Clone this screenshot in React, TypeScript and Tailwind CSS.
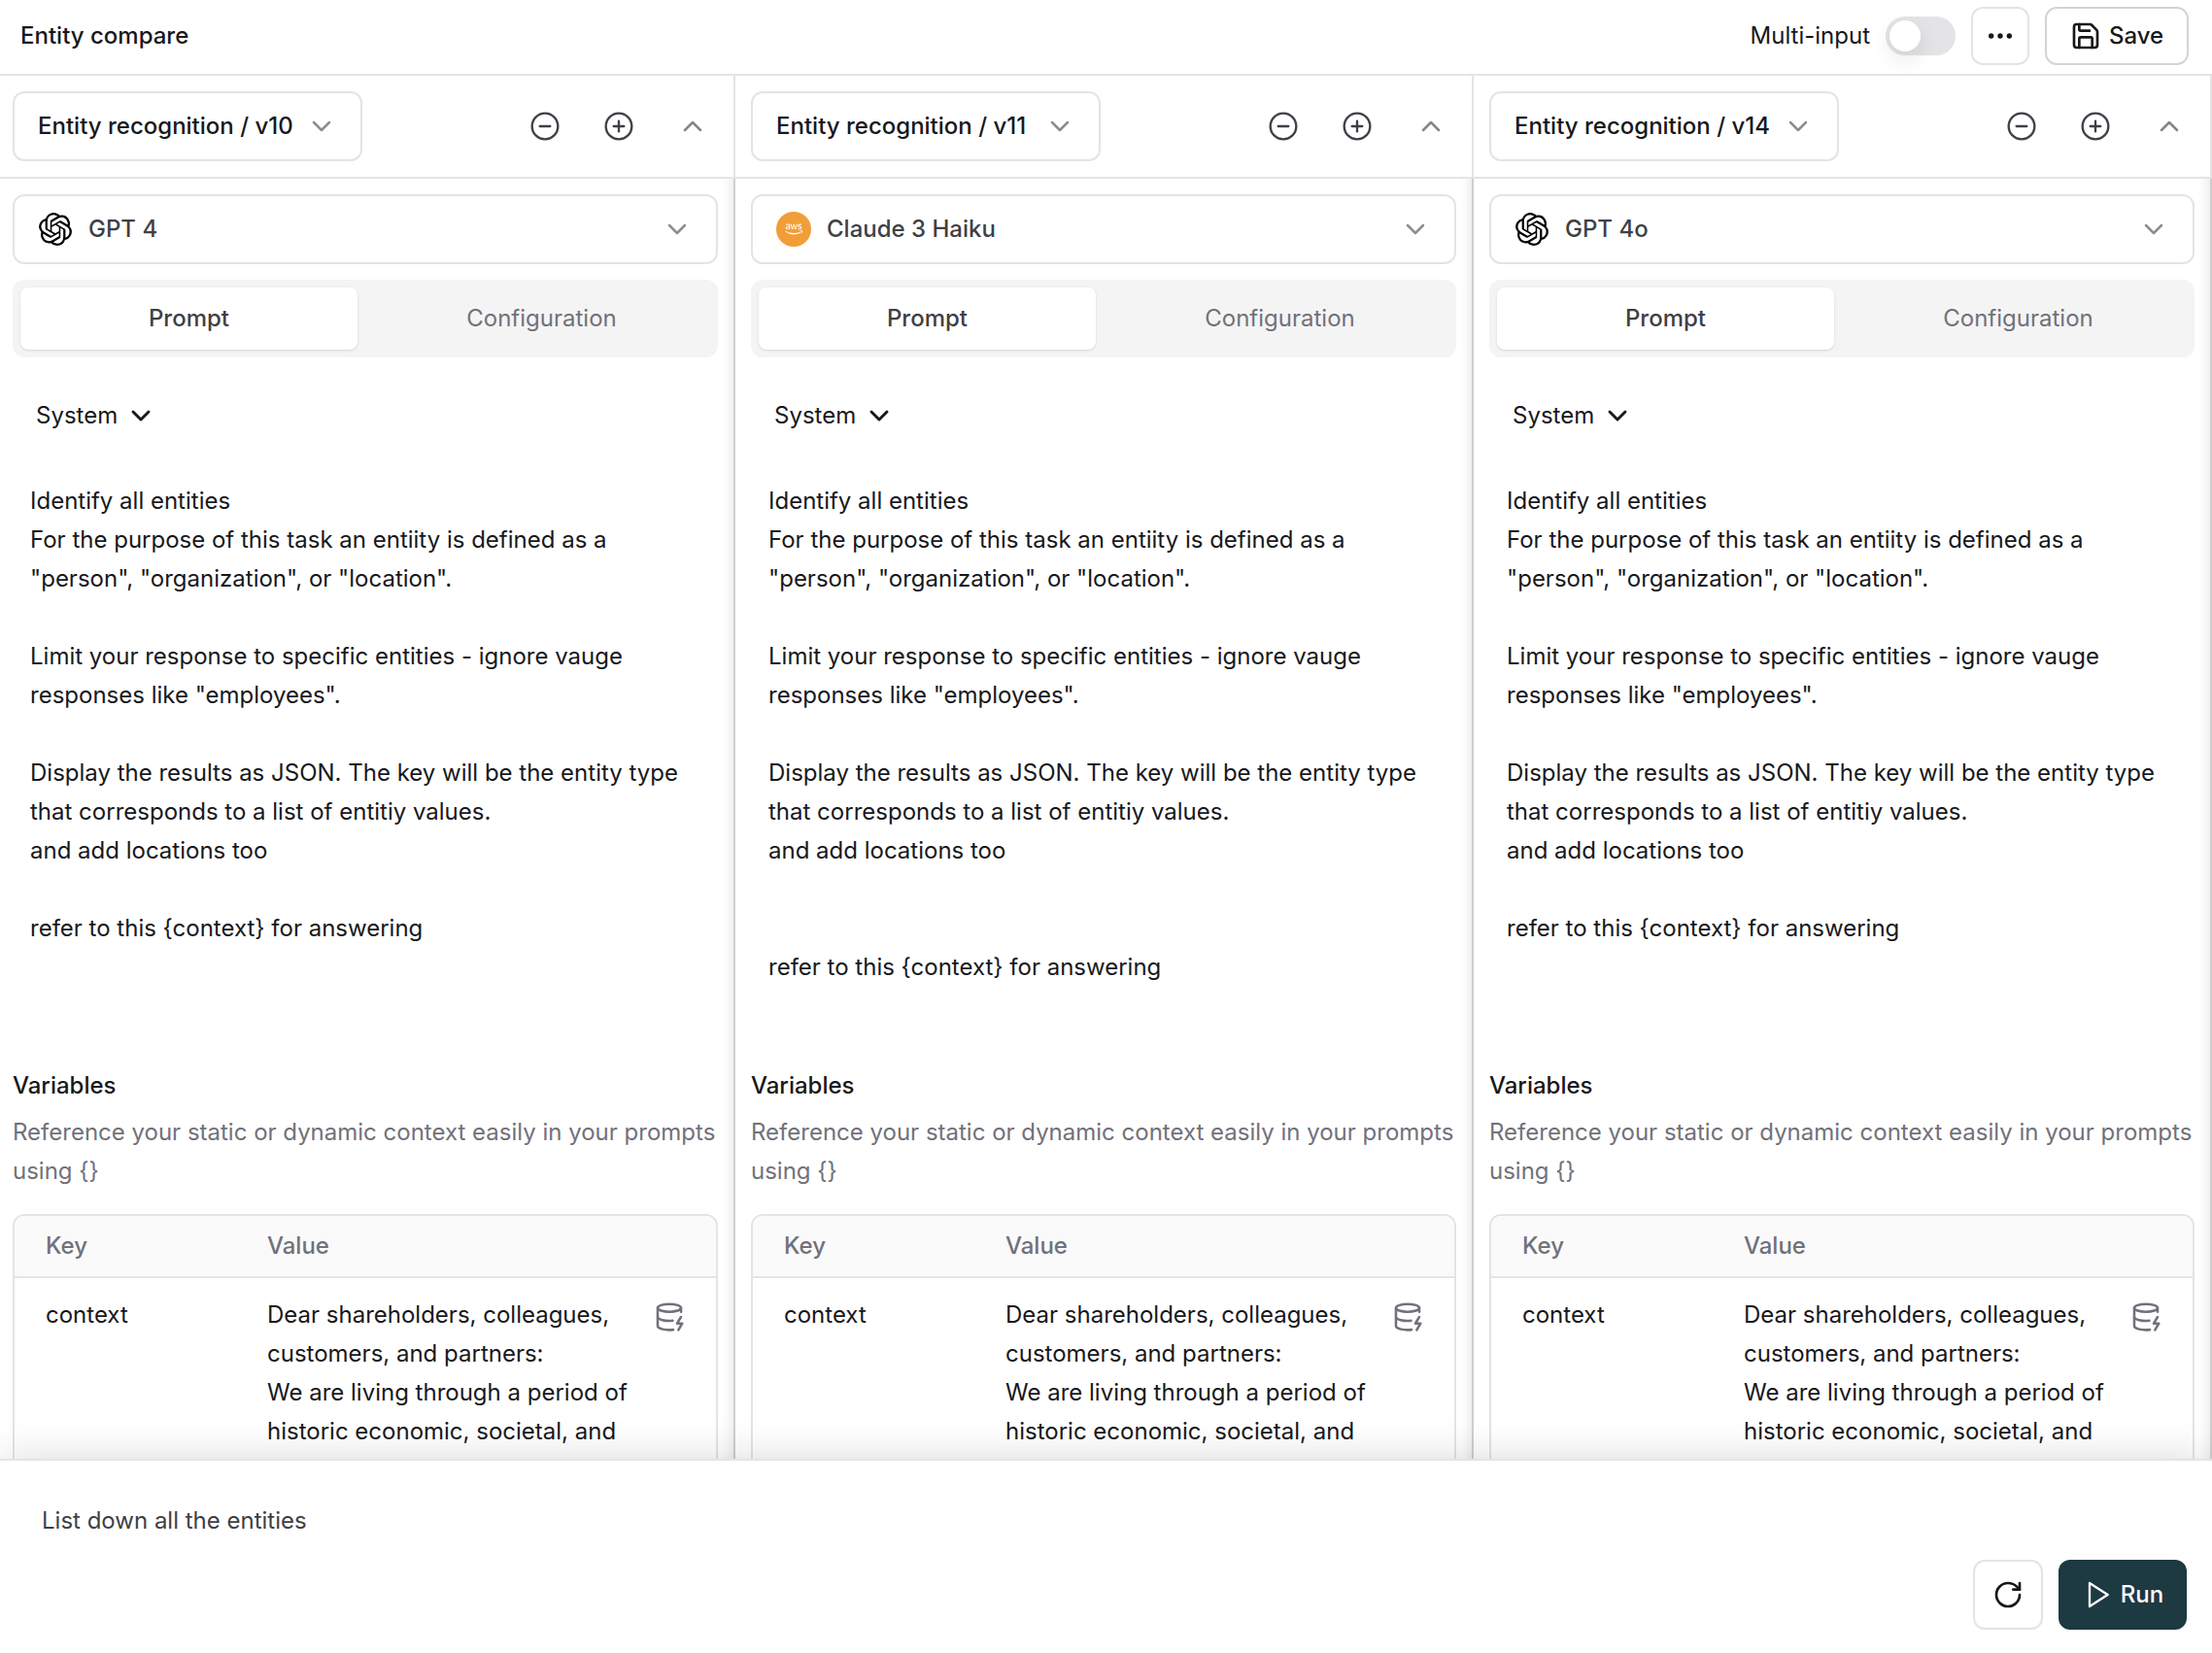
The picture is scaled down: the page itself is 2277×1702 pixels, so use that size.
import { ChevronDown, ChevronUp, CircleMinus, CirclePlus, DatabaseZap, Ellipsis, RotateCw, Save } from "lucide-react";
import { SiOpenai } from "react-icons/si";
import { FaAws } from "react-icons/fa";

const opening = `Identify all entities
For the purpose of this task an entiity is defined as a
"person", "organization", or "location".

Limit your response to specific entities - ignore vauge
responses like "employees".

Display the results as JSON. The key will be the entity type
that corresponds to a list of entitiy values.
and add locations too
`;
const closing = "refer to this {context} for answering";

const columns = [
  { version: "v10", model: "GPT 4", provider: "openai", prompt: opening + "\n" + closing },
  { version: "v11", model: "Claude 3 Haiku", provider: "aws", prompt: opening + "\n\n" + closing },
  { version: "v14", model: "GPT 4o", provider: "openai", prompt: opening + "\n" + closing },
];

function Column({ version, model, provider, prompt }: (typeof columns)[number]) {
  return (
    <section className="flex h-full w-[760px] shrink-0 flex-col">
      <div className="relative z-10 flex h-[106px] shrink-0 items-center justify-between border-r-2 border-b-2 border-[#e4e4e4] bg-white px-4">
        <button className="flex h-[72px] w-[360px] items-center rounded-xl border-2 border-[#e4e4e4] pl-6 font-medium whitespace-nowrap">
          <span className="w-[264px] text-left">Entity recognition / {version}</span>
          <ChevronDown size={32} strokeWidth={1.9} className="ml-3 text-[#8d8d8d]" />
        </button>
        <div className="flex items-center gap-11 pr-2.5 text-[#3f3f46]">
          <CircleMinus size={32} strokeWidth={1.75} />
          <CirclePlus size={32} strokeWidth={1.75} />
          <ChevronUp size={32} strokeWidth={1.9} className="text-[#85858a]" />
        </div>
      </div>
      <div className="flex min-h-0 grow flex-col border-r-2 border-[#cfcfcf] px-4 pt-4 shadow-[inset_-14px_0_14px_-14px_rgba(0,0,0,0.13)]">
        <button className="flex h-[72px] shrink-0 items-center rounded-xl border-2 border-[#e4e4e4] pr-6 pl-6 font-medium text-[#3f3f46]">
          {provider === "openai" ? (
            <span className="flex size-9 items-center justify-center text-black">
              <SiOpenai size={34} />
            </span>
          ) : (
            <span className="flex size-9 items-center justify-center rounded-full bg-[#f19e38] text-white">
              <FaAws size={18} />
            </span>
          )}
          <span className="ml-4 grow text-left">{model}</span>
          <ChevronDown size={32} strokeWidth={1.9} className="text-[#8d8d8d]" />
        </button>
        <div className="mt-4 flex h-20 shrink-0 items-center rounded-xl bg-[#f4f4f4] px-2">
          <div className="flex h-16 w-[347px] items-center justify-center rounded-lg bg-white font-medium text-[#3f3f46] shadow-sm">Prompt</div>
          <div className="ml-4 grow text-center text-[#71717a]">Configuration</div>
        </div>
        <div className="mt-10 flex h-10 shrink-0 items-center gap-2 pl-6">
          System
          <ChevronDown size={32} strokeWidth={2.2} />
        </div>
        <p className="mt-12 h-[560px] shrink-0 pl-[18px] whitespace-pre">{prompt}</p>
        <h2 className="mt-[42px] shrink-0 leading-10 font-medium">Variables</h2>
        <p className="mt-2 shrink-0 text-[#71717a]">
          Reference your static or dynamic context easily in your prompts
          <br />
          using {"{}"}
        </p>
        <div className="mt-6 flex h-[600px] shrink-0 flex-col overflow-hidden rounded-xl border-2 border-[#e4e4e4]">
          <div className="flex h-16 shrink-0 items-center border-b-2 border-[#e4e4e4] bg-[#fafafa] pl-8 font-medium text-[#71717a]">
            <span className="w-[228px]">Key</span>
            <span>Value</span>
          </div>
          <div className="flex pt-[18px] pl-8">
            <span className="w-[228px] shrink-0">context</span>
            <span className="w-[398px] shrink-0 whitespace-pre">{`Dear shareholders, colleagues,
customers, and partners:
We are living through a period of
historic economic, societal, and`}</span>
            <DatabaseZap size={32} strokeWidth={1.9} className="mt-1.5 text-[#71717a]" />
          </div>
        </div>
      </div>
    </section>
  );
}

export default function App() {
  return (
    <div className="flex h-[1702px] w-[2277px] flex-col overflow-hidden bg-white font-[Inter,sans-serif] text-[24px] leading-10 text-[#18181b]">
      <header className="flex h-[78px] shrink-0 items-center border-b-2 border-[#e4e4e4] pr-6 pb-[2px] pl-[21px] font-medium">
        <h1 className="grow">Entity compare</h1>
        <span className="font-normal">Multi-input</span>
        <div className="ml-4 flex h-10 w-[72px] items-center rounded-full bg-[#e4e4e7] px-1">
          <div className="size-8 rounded-full bg-white shadow-[0_8px_20px_2px_rgba(0,0,0,0.08)]" />
        </div>
        <button className="ml-4 flex size-[60px] items-center justify-center rounded-xl border-2 border-[#e4e4e7]">
          <Ellipsis size={32} strokeWidth={2} />
        </button>
        <button className="ml-4 flex h-[60px] w-[148px] items-center justify-center gap-2 rounded-xl border-2 border-[#d4d4d8]">
          <Save size={32} strokeWidth={2} />
          Save
        </button>
      </header>
      <main className="-ml-[3px] flex min-h-0 w-[2280px] grow overflow-hidden">
        {columns.map((c) => (
          <Column key={c.version} {...c} />
        ))}
      </main>
      <footer className="relative z-20 flex h-[200px] shrink-0 flex-col justify-between border-t-2 border-[#e4e4e4] bg-white pt-[42px] pr-[26px] pb-6 pl-[43px] shadow-[0_0_40px_rgba(0,0,0,0.15)]">
        <p className="h-0 text-[#3f3f46]">List down all the entities</p>
        <div className="flex justify-end gap-4 font-medium">
          <button className="flex size-[72px] items-center justify-center rounded-xl border-2 border-[#e4e4e4]">
            <RotateCw size={32} strokeWidth={2} />
          </button>
          <button className="flex h-[72px] w-[132px] items-center justify-center gap-2 rounded-xl bg-[#1d3941] text-white">
            <svg width="32" height="32" viewBox="0 0 24 24" fill="none" stroke="currentColor" strokeWidth="1.75" strokeLinecap="round" strokeLinejoin="round">
              <polygon points="6 3 20 12 6 21 6 3" />
            </svg>
            Run
          </button>
        </div>
      </footer>
    </div>
  );
}
